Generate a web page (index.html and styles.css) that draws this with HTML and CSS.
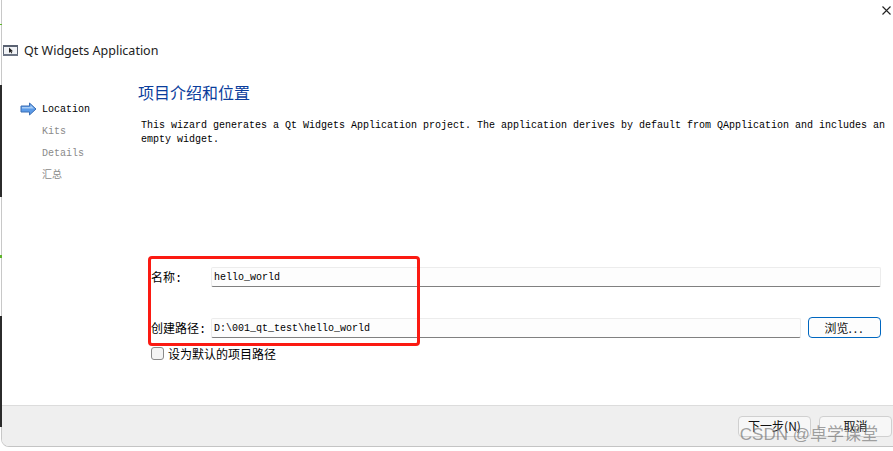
FILE: index.html
```html
<!DOCTYPE html>
<html>
<head>
    <title>Qt Widgets Application</title>
    <link rel="stylesheet" href="styles.css">
</head>
<body>
    <div class="edge edge-upper"></div>
    <div class="edge edge-lower"></div>
    <div class="tick tick-top"></div>
    <div class="tick tick-middle"></div>
    <div class="wizard">
        <div class="top-bar">
            <svg class="close" width="9" height="9" viewBox="0 0 9 9">
                <path d="M0.5 0.5 L8.5 8.5 M8.5 0.5 L0.5 8.5" stroke="#222" stroke-width="1.1" fill="none"/>
            </svg>
        </div>
        <div class="title-bar">
            <svg class="app-icon" width="15" height="11" viewBox="0 0 15 11">
                <rect x="0.5" y="0.5" width="14" height="10" fill="#f1f3f6" stroke="#5a6272"/>
                <rect x="0" y="0" width="15" height="2" fill="#5a6272"/>
                <rect x="0" y="9" width="15" height="2" fill="#6c7484"/>
                <path d="M6 2.5 L6 8 L7.4 6.8 L8.3 8.5 L9.2 8 L8.4 6.4 L10 6.2 Z" fill="#222"/>
            </svg>
            <span class="app-title">Qt Widgets Application</span>
        </div>
        <div class="main">
            <div class="steps">
                <div class="step current">
                    <svg class="arrow" width="17" height="14" viewBox="0 0 17 14">
                        <path d="M1 4 H9.5 V1 L16 7 L9.5 13 V10 H1 Z" fill="#5b9be8" stroke="#3d6fb4"/>
                        <path d="M2 5 H10.5 V3 L14 6.5 H2 Z" fill="#a9cdf5"/>
                    </svg>
                    Location
                </div>
                <div class="step">Kits</div>
                <div class="step">Details</div>
                <div class="step">汇总</div>
            </div>
            <div class="content">
                <h2 class="page-title">项目介绍和位置</h2>
                <p class="desc">This wizard generates a Qt Widgets Application project. The application derives by default from QApplication and includes an empty widget.</p>
                <div class="form">
                    <div class="form-row">
                        <label class="form-label">名称:</label>
                        <div class="field field-name">hello_world</div>
                    </div>
                    <div class="form-row path-row">
                        <label class="form-label">创建路径:</label>
                        <div class="field field-path">D:\001_qt_test\hello_world</div>
                        <button class="browse">浏览<span class="dots">...</span></button>
                    </div>
                    <div class="check-row">
                        <span class="check"></span>
                        <span>设为默认的项目路径</span>
                    </div>
                    <div class="highlight"></div>
                </div>
            </div>
        </div>
        <div class="footer">
            <button class="btn">下一步(N)</button>
            <button class="btn">取消</button>
        </div>
        <div class="watermark">CSDN @卓学课堂</div>
    </div>
</body>
</html>
```

FILE: styles.css
```css
html, body {
    margin: 0;
    padding: 0;
    height: 451px;
    overflow: hidden;
    background-color: #fff;
}
body {
    font-family: "Liberation Mono", "Noto Sans CJK SC", monospace;
    font-size: 10px;
    color: #000;
}
.edge {
    position: absolute;
    left: 0;
    width: 2px;
    background-color: #2b2b2b;
    z-index: 1;
}
.edge-upper {
    top: 85px;
    height: 112px;
}
.edge-lower {
    top: 316px;
    height: 111px;
}
.tick {
    position: absolute;
    left: 0;
    width: 2px;
    background-color: #5fb52c;
    z-index: 1;
}
.tick-top {
    top: 24px;
    height: 1px;
}
.tick-middle {
    top: 255px;
    height: 3px;
}
.wizard {
    position: relative;
    height: 446px;
    margin-left: 1px;
    border-left: 1px solid #c8c8c8;
    border-bottom: 1px solid #c4c4c4;
    border-bottom-left-radius: 8px;
    display: flex;
    flex-direction: column;
    overflow: hidden;
}
.top-bar {
    height: 42px;
    display: flex;
    justify-content: flex-end;
    padding: 6px 0 0;
    box-sizing: border-box;
}
.close {
    margin-right: 2px;
}
.title-bar {
    height: 16px;
    padding-left: 1px;
    display: flex;
    align-items: flex-start;
    gap: 6px;
}
.app-icon {
    margin-top: 3px;
}
.app-title {
    font-family: "Noto Sans", sans-serif;
    font-size: 12.5px;
    line-height: 17px;
    color: #222;
}
.main {
    flex: 1;
    display: flex;
}
.steps {
    width: 135px;
    padding-top: 41px;
    flex-shrink: 0;
}
.step {
    height: 22px;
    line-height: 22px;
    padding-left: 40px;
    color: #8a8a8a;
    position: relative;
}
.step.current {
    color: #000;
}
.arrow {
    position: absolute;
    left: 18px;
    top: 3px;
}
.content {
    flex: 1;
    min-width: 0;
}
.page-title {
    margin: 23px 0 0 1px;
    font-family: "Noto Sans CJK SC", sans-serif;
    font-size: 16px;
    line-height: 22px;
    font-weight: normal;
    color: #0a3d9c;
}
.desc {
    margin: 16px 6px 0 4px;
    line-height: 14px;
}
.form {
    position: relative;
    margin-top: 119px;
    padding-left: 12px;
}
.form-row {
    display: flex;
    align-items: center;
    height: 21px;
}
.path-row {
    margin-top: 30px;
}
.form-label {
    width: 60px;
    flex-shrink: 0;
    margin-left: 2px;
    font-size: 12px;
}
.field {
    height: 20px;
    line-height: 19px;
    padding-left: 2px;
    box-sizing: border-box;
    background-color: #fdfdfd;
    border: 1px solid #ececec;
    border-bottom: 1px solid #808080;
    border-radius: 2px;
}
.field-name {
    width: 670px;
}
.field-path {
    width: 590px;
}
.browse {
    width: 73px;
    height: 21px;
    margin-left: 7px;
    padding: 0;
    background-color: #fdfdfd;
    border: 1px solid #0067c0;
    border-radius: 4px;
    font-family: "Noto Sans CJK SC", sans-serif;
    font-size: 12px;
    line-height: 18px;
    color: #111;
}
.dots {
    letter-spacing: 2px;
}
.check-row {
    display: flex;
    align-items: center;
    gap: 4px;
    height: 18px;
    margin-top: 6px;
    margin-left: 2px;
    font-family: "Noto Sans CJK SC", sans-serif;
    font-size: 12px;
}
.check {
    width: 11px;
    height: 11px;
    background-color: #f4f4f4;
    border: 1px solid #8a8a8a;
    border-radius: 3px;
}
.highlight {
    position: absolute;
    left: 11px;
    top: -10px;
    width: 266px;
    height: 84px;
    border: 3px solid #fb1a12;
    border-radius: 4px;
}
.footer {
    height: 40px;
    flex-shrink: 0;
    background-color: #efefef;
    border-top: 1px solid #dcdcdc;
    display: flex;
    justify-content: flex-end;
    align-items: center;
    gap: 8px;
    padding-right: 1px;
}
.btn {
    width: 73px;
    height: 21px;
    padding: 0;
    background-color: #f7f7f7;
    border: 1px solid #d0d0d0;
    border-radius: 4px;
    font-family: "Noto Sans CJK SC", sans-serif;
    font-size: 12px;
    line-height: 18px;
    color: #111;
}
.watermark {
    position: absolute;
    right: 15px;
    bottom: 1px;
    font-family: "Liberation Sans", "Noto Sans CJK SC", sans-serif;
    font-size: 17px;
    color: rgba(110, 110, 110, 0.65);
}
```
